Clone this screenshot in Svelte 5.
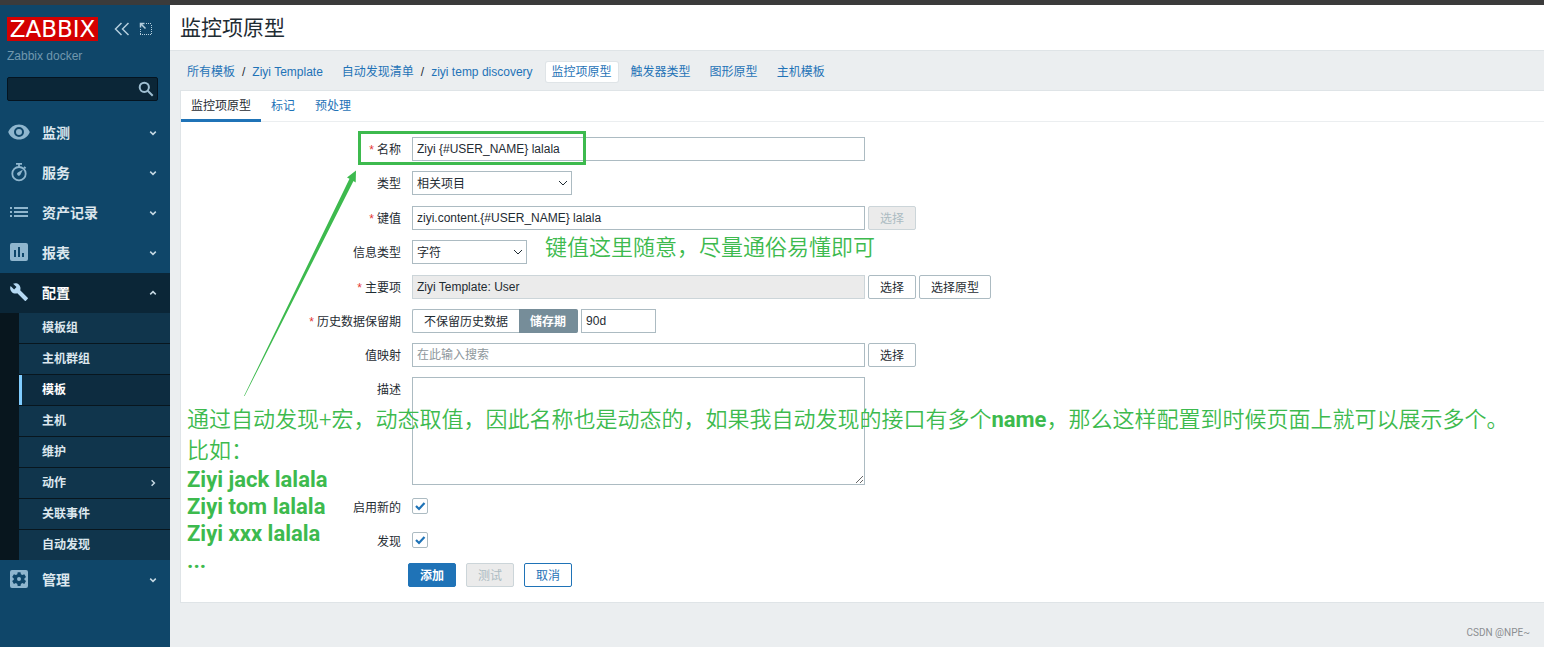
<script>
  const topMenu = [
    { icon: 'eye', text: '监测' },
    { icon: 'timer', text: '服务' },
    { icon: 'list', text: '资产记录' },
    { icon: 'chart', text: '报表' },
    {
      icon: 'wrench',
      text: '配置',
      open: true,
      items: [
        { text: '模板组' },
        { text: '主机群组' },
        { text: '模板', selected: true },
        { text: '主机' },
        { text: '维护' },
        { text: '动作', more: true },
        { text: '关联事件' },
        { text: '自动发现' }
      ]
    },
    { icon: 'gear', text: '管理' }
  ];

  const examples = ['Ziyi jack lalala', 'Ziyi tom lalala', 'Ziyi xxx lalala', '...'];

  let name = $state('Ziyi {#USER_NAME} lalala');
  let key = $state('ziyi.content.{#USER_NAME} lalala');
  let history = $state('keep');
  let period = $state('90d');
</script>

{#snippet icon(kind)}
  <svg class="icon" viewBox="0 0 22 20" aria-hidden="true">
    {#if kind === 'eye'}
      <path fill-rule="evenodd" d="M11 2.4C6 2.4 2 5.4.2 10 2 14.600 6 17.600 11 17.600S20 14.600 21.800 10C20 5.400 16 2.400 11 2.400ZM11 15a5 5 0 1 1 0-10 5 5 0 0 1 0 10Zm0-8a3 3 0 1 0 0 6 3 3 0 0 0 0-6Z" />
    {:else if kind === 'timer'}
      <g fill="none" stroke="currentColor" stroke-width="1.8">
        <circle cx="11" cy="11.700" r="6.700" />
        <path d="M8 1.900h6M11 2v3M16 4.800l1.600 1.600" />
      </g>
      <path d="M15 7.400l-2.600 5.400a1.800 1.800 0 1 1-2.600-2.400z" />
    {:else if kind === 'list'}
      <path d="M2 5h2v2H2zM6 5h14v2H6zM2 9h2v2H2zM6 9h14v2H6zM2 13h2v2H2zM6 13h14v2H6z" />
    {:else if kind === 'chart'}
      <path fill-rule="evenodd" d="M4 1h14a2 2 0 0 1 2 2v14a2 2 0 0 1-2 2H4a2 2 0 0 1-2-2V3a2 2 0 0 1 2-2ZM6 8v7h2V8ZM10 5v10h2V5ZM14 11v4h2v-4Z" />
    {:else if kind === 'wrench'}
      <path d="M19.700 15.800l-7.500-7.500c.7-1.900.3-4.100-1.200-5.600C9.400 1.100 7 .8 5.100 1.700l3.400 3.400-2.400 2.400L2.600 4.100C1.700 6 2.100 8.400 3.700 10c1.500 1.500 3.700 1.900 5.600 1.200l7.500 7.500c.3.3.8.3 1.100 0l1.900-1.900c.3-.2.3-.7-.1-1Z" />
    {:else}
      <path fill-rule="evenodd" d="M4 1h14a2 2 0 0 1 2 2v14a2 2 0 0 1-2 2H4a2 2 0 0 1-2-2V3a2 2 0 0 1 2-2ZM9.700 3.200l-.4 2-1.400.8-2-.8-1.700 2.900 1.600 1.300v1.300l-1.600 1.300 1.700 2.900 2-.8 1.400.8.4 2h2.800l.4-2 1.400-.8 2 .8 1.700-2.900-1.600-1.300V9.400l1.600-1.300-1.700-2.900-2 .8-1.400-.8-.4-2ZM11 8a2 2 0 1 1 0 4 2 2 0 0 1 0-4Z" />
    {/if}
  </svg>
{/snippet}

{#snippet chevron(direction)}
  <svg class="chevron {direction}" viewBox="0 0 8 8" aria-hidden="true"><path d="M1.200 2.600L4 5.400l2.800-2.800" /></svg>
{/snippet}

<div class="window-edge"></div>
<div class="page">
  <aside>
    <div class="brand">
      <a class="logo" href="#home">ZABBIX</a>
      <button class="tool" type="button" aria-label="收起侧栏">
        <svg viewBox="0 0 16 14" aria-hidden="true"><path d="M7.500 1L1.500 7l6 6M14.500 1l-6 6 6 6" /></svg>
      </button>
      <button class="tool small" type="button" aria-label="隐藏侧栏">
        <svg viewBox="0 0 14 14" aria-hidden="true">
          <path d="M7 1.500h6M12.500 3v10M1 12.500h11M1.500 7v5" stroke-dasharray="1 1" stroke-width="1" />
          <path d="M2 2l4.500 4.500M1.500 5.500v-4h4" />
        </svg>
      </button>
    </div>
    <div class="server">Zabbix docker</div>
    <form class="search" role="search">
      <input type="text" aria-label="搜索" />
      <button type="button" aria-label="开始搜索">
        <svg viewBox="0 0 16 16" aria-hidden="true"><circle cx="6.300" cy="6.300" r="4.600" /><path d="M9.700 9.700l5 5" /></svg>
      </button>
    </form>
    <nav>
      <ul class="menu">
        {#each topMenu as entry}
          <li>
            <a class="entry" class:open={entry.open} href="#menu">
              {@render icon(entry.icon)}
              <span>{entry.text}</span>
              {@render chevron(entry.open ? 'up' : 'down')}
            </a>
            {#if entry.items}
              <ul class="submenu">
                {#each entry.items as item}
                  <li>
                    <a class:selected={item.selected} href="#submenu">
                      <span>{item.text}</span>
                      {#if item.more}{@render chevron('right')}{/if}
                    </a>
                  </li>
                {/each}
              </ul>
            {/if}
          </li>
        {/each}
      </ul>
    </nav>
  </aside>

  <main>
    <header><h1>监控项原型</h1></header>

    <nav class="crumbs">
      <span class="crumb"><a href="#templates">所有模板</a><i>/</i><a href="#template">Ziyi Template</a></span>
      <span class="crumb"><a href="#discovery">自动发现清单</a><i>/</i><a href="#rule">ziyi temp discovery</a></span>
      <span class="crumb current"><a href="#items">监控项原型</a></span>
      <span class="crumb"><a href="#triggers">触发器类型</a></span>
      <span class="crumb"><a href="#graphs">图形原型</a></span>
      <span class="crumb"><a href="#hosts">主机模板</a></span>
    </nav>

    <section class="card">
      <div class="tabs">
        <a class="active" href="#item">监控项原型</a>
        <a href="#tags">标记</a>
        <a href="#steps">预处理</a>
      </div>

      <form class="fields">
        <label class="required" for="name">名称</label>
        <div class="field"><input id="name" class="wide" type="text" bind:value={name} /></div>

        <label for="type">类型</label>
        <div class="field pick">
          <div class="select type">
            <select id="type"><option>相关项目</option></select>
            <svg viewBox="0 0 10 6" aria-hidden="true"><path d="M1 1l4 4 4-4" /></svg>
          </div>
        </div>

        <label class="required" for="key">键值</label>
        <div class="field">
          <input id="key" class="wide" type="text" bind:value={key} />
          <button type="button" disabled>选择</button>
        </div>

        <label for="value-type">信息类型</label>
        <div class="field pick">
          <div class="select info">
            <select id="value-type"><option>字符</option></select>
            <svg viewBox="0 0 10 6" aria-hidden="true"><path d="M1 1l4 4 4-4" /></svg>
          </div>
        </div>

        <label class="required" for="master">主要项</label>
        <div class="field">
          <input id="master" class="wide" type="text" value="Ziyi Template: User" readonly />
          <button type="button">选择</button>
          <button type="button">选择原型</button>
        </div>

        <label class="required" for="period">历史数据保留期</label>
        <div class="field">
          <div class="segments">
            <input id="history-off" type="radio" name="history" value="off" bind:group={history} />
            <label for="history-off">不保留历史数据</label>
            <input id="history-keep" type="radio" name="history" value="keep" bind:group={history} />
            <label for="history-keep">储存期</label>
          </div>
          <input id="period" class="short" type="text" bind:value={period} />
        </div>

        <label for="valuemap">值映射</label>
        <div class="field">
          <input id="valuemap" class="wide" type="text" placeholder="在此输入搜索" />
          <button type="button">选择</button>
        </div>

        <label for="description">描述</label>
        <div class="field"><textarea id="description" class="wide"></textarea></div>

        <label for="enabled">启用新的</label>
        <div class="field"><input id="enabled" type="checkbox" checked /></div>

        <label for="discover">发现</label>
        <div class="field"><input id="discover" type="checkbox" checked /></div>

        <div class="actions">
          <button class="primary" type="button">添加</button>
          <button type="button" disabled>测试</button>
          <button class="outline" type="button">取消</button>
        </div>
      </form>
    </section>
  </main>

  <div class="notes">
    <div class="frame"></div>
    <svg class="arrow" viewBox="0 0 116 230" aria-hidden="true">
      <path d="M2 226L107.500 8.800l-2.500-1.300L114 .5l-.3 12-2.200-1.400L2.600 226z" />
    </svg>
    <p class="note key-note">键值这里随意，尽量通俗易懂即可</p>
    <div class="note name-note">
      <p>通过自动发现+宏，动态取值，因此名称也是动态的，如果我自动发现的接口有多个<b>name</b>，那么这样配置到时候页面上就可以展示多个。</p>
      <p>比如：</p>
      <ul>
        {#each examples as line}<li>{line}</li>{/each}
      </ul>
    </div>
    <span class="watermark">CSDN @NPE~</span>
  </div>
</div>

<style>
  :global(body) {
    background: #ebeef0;
    color: #1f2c33;
    font: 12px/24px "Liberation Sans", "Noto Sans CJK SC", sans-serif;
  }
  :global(#app) {
    display: flex;
    flex-direction: column;
    min-height: 100vh;
  }
  ul, p, h1 { margin: 0; padding: 0; list-style: none; }
  a { color: #1f73b7; text-decoration: none; }
  svg { display: block; }
  input, select, textarea, button {
    box-sizing: border-box;
    margin: 0;
    font: inherit;
    color: inherit;
  }

  .window-edge { height: 5px; background: #3b3b3b; }
  .page { position: relative; display: flex; flex: 1; }

  aside { width: 170px; flex: none; background: #0f4669; }
  .brand { display: flex; align-items: center; padding: 12px 0 0 7px; }
  .logo {
    width: 91px;
    margin-right: 15px;
    background: #d40000;
    color: #fff;
    font: 23px/24px "DejaVu Sans", sans-serif;
    text-align: center;
  }
  .tool { padding: 0; border: 0; background: none; color: #b4cedd; }
  .tool svg { width: 18px; height: 14px; fill: none; stroke: currentColor; stroke-width: 1.5; }
  .tool.small { margin-left: 8px; }
  .tool.small svg { width: 14px; }
  .server { padding: 3px 7px 0; color: #7198ae; }
  .search { position: relative; margin: 9px 12px 12px 7px; }
  .search button {
    position: absolute;
    top: 4px;
    right: 4px;
    padding: 0;
    border: 0;
    background: none;
    color: #9fbfd2;
  }
  .search svg { width: 16px; height: 16px; fill: none; stroke: currentColor; stroke-width: 2; }

  .entry {
    display: flex;
    align-items: center;
    height: 40px;
    padding: 0 13px 0 8px;
    gap: 12px;
    color: #dce7ee;
    font-size: 14px;
    font-weight: 700;
  }
  .entry.open { background: #0b2637; color: #fff; }
  .entry.open .icon { color: #b5d9f3; }
  .icon { width: 22px; height: 20px; margin-bottom: 2px; fill: currentColor; color: #8fb6ce; }
  .chevron {
    width: 8px;
    height: 8px;
    margin-left: auto;
    fill: none;
    stroke: #c5d8e3;
    stroke-width: 1.5;
  }
  .chevron.up { transform: rotate(180deg); }
  .chevron.right { transform: rotate(-90deg); }
  .submenu {
    display: grid;
    gap: 1px;
    border-left: 19px solid #08161e;
    background: #08161e;
  }
  .submenu a {
    display: flex;
    align-items: center;
    height: 30px;
    padding: 0 13px 0 20px;
    border-left: 3px solid transparent;
    background: #10354c;
    color: #dce7ee;
    font-weight: 700;
  }
  .submenu a.selected { border-left-color: #80cdff; background: #0d2c40; color: #fff; }

  main { flex: 1; min-width: 0; }
  header { padding: 0 10px; border-bottom: 1px solid #dfe4e7; background: #fff; }
  h1 { font-size: 21px; font-weight: 400; line-height: 45px; }

  .crumbs { display: flex; gap: 7px; padding: 11px 11px 8px; }
  .crumb { padding: 0 6px; line-height: 20px; }
  .crumb i { margin: 0 7px; font-style: normal; }
  .crumb.current { background: #fff; border-radius: 2px; box-shadow: 0 0 0 1px #dfe4e7; }

  .card {
    margin-left: 10px;
    border: solid #dfe4e7;
    border-width: 1px 0 1px 1px;
    background: #fff;
  }
  .tabs { display: flex; height: 30px; border-bottom: 1px solid #ebeef0; }
  .tabs a { height: 28px; padding: 0 10px; line-height: 30px; }
  .tabs a.active { border-bottom: 3px solid #1f73b7; color: #1f2c33; }

  .fields {
    display: grid;
    grid-template-columns: 220px 1fr;
    gap: 10px 11px;
    padding: 15px 0;
  }
  .fields > label { height: 24px; line-height: 26px; text-align: right; }
  .required::before { content: "*"; margin-right: 3px; color: #e33734; }
  .field { display: flex; align-items: flex-start; gap: 3px; }
  .pick { min-height: 25px; }
  input[type="text"], select, textarea {
    height: 24px;
    padding: 0 5px 0 4px;
    border: 1px solid #acbbc2;
    border-radius: 0;
    background: #fff;
    outline: 0;
  }
  .search input[type="text"] {
    display: block;
    width: 100%;
    padding-right: 28px;
    border-color: #041420;
    border-radius: 2px;
    background: #0b2637;
  }
  .wide { width: 453px; }
  .short { width: 75px; }
  .field input[readonly] { border-color: #ccd5d9; background: #ebebeb; }
  input::placeholder { color: #8e979c; opacity: 1; }
  textarea.wide { height: 108px; }
  .select { position: relative; }
  .select select { width: 100%; appearance: none; }
  .select svg {
    position: absolute;
    top: 9px;
    right: 4px;
    width: 10px;
    height: 6px;
    fill: none;
    stroke: #1f2c33;
    pointer-events: none;
  }
  .type { width: 160px; }
  .info { width: 115px; }

  .fields button {
    height: 24px;
    padding: 0 11px;
    border: 1px solid #acbbc2;
    border-radius: 2px;
    background: #fff;
    line-height: 24px;
  }
  .fields button:disabled { border-color: #ccd5d9; background: #ebebeb; color: #acbbc2; }
  .fields button.primary { border-color: #1f73b7; background: #1f73b7; color: #fff; font-weight: 700; }
  .fields button.outline { border-color: #1f73b7; color: #1f73b7; }

  .segments { display: flex; }
  .segments input { position: absolute; opacity: 0; pointer-events: none; }
  .segments label {
    height: 22px;
    padding: 0 11px;
    border: 1px solid #acbbc2;
    line-height: 24px;
  }
  .segments label:first-of-type { border-right: 0; border-radius: 2px 0 0 2px; }
  .segments label:last-of-type { border-left: 0; border-radius: 0 2px 2px 0; }
  .segments input:checked + label { border-color: #768d99; background: #768d99; color: #fff; font-weight: 700; }

  input[type="checkbox"] {
    width: 16px;
    height: 16px;
    margin-top: 3px;
    border: 1px solid #acbbc2;
    border-radius: 2px;
    appearance: none;
    background: #fff;
  }
  input[type="checkbox"]:checked {
    background: #fff url("data:image/svg+xml,%3Csvg xmlns='http://www.w3.org/2000/svg' viewBox='0 0 14 14'%3E%3Cpath d='M3 7l3 3 5.500-6' fill='none' stroke='%231f73b7' stroke-width='2.200'/%3E%3C/svg%3E") center / 14px 14px no-repeat;
  }
  .actions { display: flex; grid-column: 1 / -1; gap: 10px; padding-left: 227px; }

  .notes { position: absolute; inset: 0; pointer-events: none; color: #3dba4e; }
  .frame {
    position: absolute;
    top: 126px;
    left: 358px;
    width: 222px;
    height: 28px;
    border: 3px solid #3dba4e;
  }
  .arrow { position: absolute; top: 165px; left: 242px; width: 116px; height: 230px; fill: #3dba4e; }
  .note {
    position: absolute;
    font: 350 22px/31px Roboto, "Noto Sans CJK SC", sans-serif;
    white-space: nowrap;
  }
  .key-note { top: 227px; left: 545px; }
  .name-note { top: 399px; left: 187px; }
  .note b, .note ul { font-weight: 700; }
  .note ul { line-height: 27px; }
  .watermark {
    position: absolute;
    right: 14px;
    bottom: 2px;
    color: #8b8f92;
    font: 10px/24px Roboto, sans-serif;
  }
</style>
